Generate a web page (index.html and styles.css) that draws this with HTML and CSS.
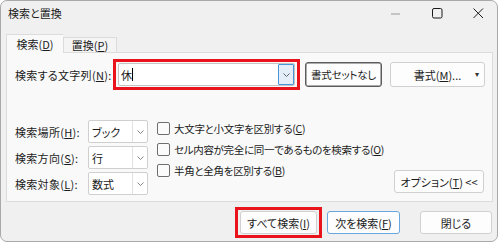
FILE: index.html
```html
<!DOCTYPE html>
<html lang="ja">
<head>
<meta charset="utf-8">
<link rel="stylesheet" href="styles.css">
</head>
<body>
<div class="window">
  <div class="titlebar">
    <span class="title">検索と置換</span>
    <div class="controls">
      <span class="ctl min"><svg width="10" height="10" viewBox="0 0 10 10"><line x1="0" y1="5" x2="9" y2="5" stroke="#9a9a9a" stroke-width="1"/></svg></span>
      <span class="ctl max"><svg width="11" height="11" viewBox="0 0 11 11"><rect x="0.5" y="0.5" width="9.5" height="9.5" rx="1.5" fill="none" stroke="#1a1a1a" stroke-width="1"/></svg></span>
      <span class="ctl close"><svg width="11" height="11" viewBox="0 0 11 11"><path d="M0.5 0.5 L10 10 M10 0.5 L0.5 10" stroke="#1a1a1a" stroke-width="1"/></svg></span>
    </div>
  </div>
  <div class="tabs">
    <div class="tab active">検索(<u>D</u>)</div>
    <div class="tab">置換(<u>P</u>)</div>
  </div>
  <div class="panel">
    <div class="row-find">
      <span class="label find-label">検索する文字列(<u>N</u>):</span>
      <div class="highlight">
        <div class="combo">
          <span class="combo-text">休<span class="caret"></span></span>
          <span class="combo-btn hot"><svg width="7" height="4" viewBox="0 0 7 4"><path d="M0.5 0.5 L3.5 3.5 L6.5 0.5" fill="none" stroke="#555" stroke-width="0.9"/></svg></span>
        </div>
      </div>
      <button class="btn btn-dark">書式セットなし</button>
      <button class="btn btn-format"><span>書式(<u>M</u>)...</span><span class="arrow">▾</span></button>
    </div>
    <div class="spacer"></div>
    <div class="row-options">
      <div class="selects">
        <span class="label">検索場所(<u>H</u>):</span>
        <div class="select"><span class="select-text">ブック</span><span class="select-btn"><svg width="7" height="4" viewBox="0 0 7 4"><path d="M0.5 0.5 L3.5 3.5 L6.5 0.5" fill="none" stroke="#777" stroke-width="0.9"/></svg></span></div>
        <span class="label">検索方向(<u>S</u>):</span>
        <div class="select"><span class="select-text">行</span><span class="select-btn"><svg width="7" height="4" viewBox="0 0 7 4"><path d="M0.5 0.5 L3.5 3.5 L6.5 0.5" fill="none" stroke="#777" stroke-width="0.9"/></svg></span></div>
        <span class="label">検索対象(<u>L</u>):</span>
        <div class="select"><span class="select-text">数式</span><span class="select-btn"><svg width="7" height="4" viewBox="0 0 7 4"><path d="M0.5 0.5 L3.5 3.5 L6.5 0.5" fill="none" stroke="#777" stroke-width="0.9"/></svg></span></div>
      </div>
      <div class="checks">
        <label class="check"><span class="box"></span>大文字と小文字を区別する(<u>C</u>)</label>
        <label class="check"><span class="box"></span>セル内容が完全に同一であるものを検索する(<u>O</u>)</label>
        <label class="check"><span class="box"></span>半角と全角を区別する(<u>B</u>)</label>
      </div>
      <button class="btn btn-options">オプション(<u>T</u>) &lt;&lt;</button>
    </div>
  </div>
  <div class="footer">
    <div class="highlight hl-btn">
      <button class="btn btn-foot btn-all">すべて検索(<u>I</u>)</button>
    </div>
    <button class="btn btn-foot btn-next">次を検索(<u>F</u>)</button>
    <button class="btn btn-foot btn-close">閉じる</button>
  </div>
</div>
</body>
</html>
```
FILE: styles.css
```css
* { box-sizing: border-box; }
html, body { margin: 0; padding: 0; background: #ffffff; }
body {
  width: 500px;
  height: 243px;
  font-family: "Noto Sans CJK JP", "Noto Sans", sans-serif;
  font-size: 11px;
  color: #1b1b1b;
  white-space: nowrap;
  font-feature-settings: "palt" 1;
}
u { text-decoration: underline; text-underline-offset: 1px; }

.window {
  width: 498px;
  height: 242px;
  border: 1px solid #a9a9a9;
  border-radius: 7px;
  background: #f0f0f0;
  display: flex;
  flex-direction: column;
  overflow: hidden;
}

.titlebar {
  height: 25px;
  display: flex;
  align-items: center;
  padding-left: 7px;
}
.title { font-size: 11px; line-height: 1; }
.controls { margin-left: auto; display: flex; align-items: center; }
.ctl { display: flex; align-items: center; justify-content: center; height: 25px; }
.min { width: 10px; margin-right: 31px; }
.max { width: 11px; margin-right: 30px; margin-top: -1px; }
.close { width: 11px; margin-right: 13px; margin-top: -1px; }

.tabs {
  margin-top: 8px;
  margin-left: 5px;
  display: flex;
  align-items: flex-end;
  height: 18px;
  position: relative;
  z-index: 1;
}
.tab {
  height: 15px;
  width: 54px;
  border: 1px solid #dcdcdc;
  border-bottom: none;
  background: #f4f4f4;
  display: flex;
  align-items: center;
  justify-content: center;
  font-size: 11px;
  flex-shrink: 0;
}
.tab.active {
  height: 19px;
  width: 57px;
  background: #f9f9f9;
  margin-bottom: -1px;
  border-right: none;
}

.panel {
  margin-left: 5px;
  width: 487px;
  height: 150px;
  border: 1px solid #dcdcdc;
  background: #f9f9f9;
  display: flex;
  flex-direction: column;
  padding: 6px 0 6px 8px;
}

.row-find { display: flex; align-items: center; }
.find-label { width: 98px; flex-shrink: 0; letter-spacing: 0.3px; }
.highlight {
  border: 3px solid #e8131b;
  padding: 1px 2px;
  display: flex;
  flex-shrink: 0;
}
.combo {
  width: 177px;
  height: 23px;
  background: #ffffff;
  border: 1px solid #c4c4c4;
  border-radius: 2px;
  display: flex;
  align-items: stretch;
}
.combo-text { flex: 1; display: flex; align-items: center; padding-left: 2px; font-size: 11px; }
.caret { display: inline-block; width: 1px; height: 13px; background: #000; }
.combo-btn {
  width: 16px;
  display: flex;
  align-items: center;
  justify-content: center;
}
.combo-btn.hot { background: #e3eef9; border: 1px solid #4a95d8; border-radius: 1px; }

.btn {
  font-family: inherit;
  font-size: 11px;
  font-feature-settings: "palt" 1;
  color: #1b1b1b;
  background: #fdfdfd;
  border: 1px solid #d0d0d0;
  border-radius: 3px;
  padding: 0;
  display: flex;
  align-items: center;
  justify-content: center;
  white-space: nowrap;
  flex-shrink: 0;
}
.btn-dark {
  width: 77px;
  height: 25px;
  margin-left: 5px;
  border: 1px solid #5c5c5c;
  box-shadow: inset 0 0 0 0.5px #5c5c5c;
  font-size: 10.5px;
  letter-spacing: -0.2px;
}
.btn-format {
  width: 95px;
  height: 25px;
  margin-left: 8px;
  position: relative;
}
.btn-format .arrow { position: absolute; right: 5px; top: 5px; font-size: 8px; color: #333; }

.spacer { flex: 1; }

.row-options { display: flex; align-items: flex-end; }
.selects {
  display: grid;
  grid-template-columns: 73px 60px;
  row-gap: 3px;
  align-items: center;
  flex-shrink: 0;
}
.label { letter-spacing: 0.3px; }
.select {
  height: 23px;
  background: #fff;
  border: 1px solid #cfcfcf;
  border-radius: 2px;
  display: flex;
}
.select-text { flex: 1; display: flex; align-items: center; padding-left: 3px; }
.select-btn {
  width: 15px;
  border-left: 1px solid #e2e2e2;
  display: flex;
  align-items: center;
  justify-content: center;
}

.checks {
  display: flex;
  flex-direction: column;
  margin-left: 9px;
  align-self: flex-start;
  margin-top: -2px;
  flex-shrink: 0;
  font-size: 10.5px;
  letter-spacing: -0.3px;
}
.check { display: flex; align-items: center; height: 21px; }
.box {
  width: 13px;
  height: 13px;
  border: 1px solid #6e6e6e;
  border-radius: 2px;
  background: #fbfbfb;
  margin-right: 4px;
  flex-shrink: 0;
}
.btn-options {
  margin-left: auto;
  margin-right: 8px;
  margin-bottom: 2px;
  width: 90px;
  height: 23px;
}

.footer {
  display: flex;
  align-items: center;
  margin-top: 5px;
  padding-left: 234px;
}
.hl-btn { padding: 1px 2px; }
.btn-foot { height: 23px; }
.btn-all { width: 77px; }
.btn-next { width: 73px; margin-left: 5px; border-color: #6aa7de; }
.btn-close { width: 72px; margin-left: 20px; }
```
